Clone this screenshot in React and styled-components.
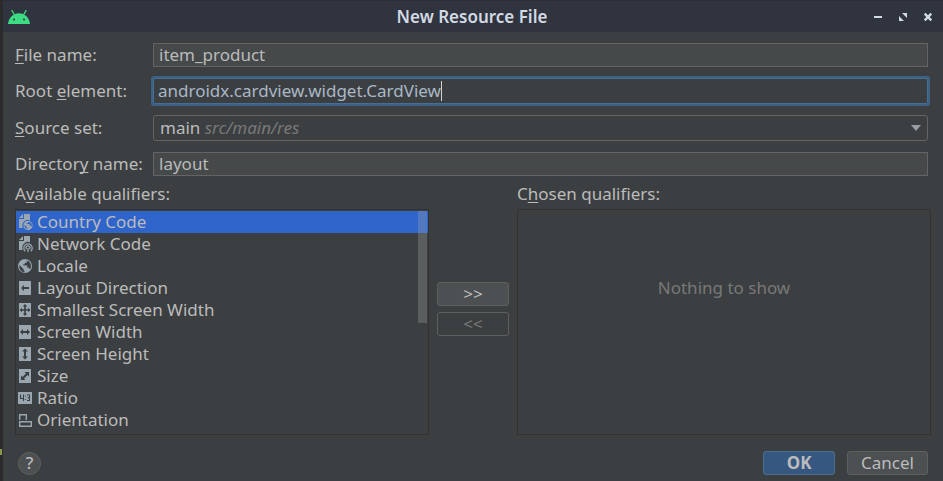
import React, { useState } from "react";
import styled, { createGlobalStyle, css } from "styled-components";

const GlobalStyle = createGlobalStyle`
  * { box-sizing: border-box; }
  body {
    margin: 0;
    background: #3c3f41;
    color: #bbbbbb;
    font-family: "Noto Sans", "Open Sans", sans-serif;
    font-size: 17px;
    line-height: 22px;
  }
  button, input, select { font: inherit; color: inherit; margin: 0; }
`;

const Screen = styled.div`
  display: grid;
  grid-template-columns: 3px 1fr;
  min-height: 100vh;
  background: #3c3f41;
`;

const Gutter = styled.div`
  display: flex;
  align-items: flex-end;
  padding-bottom: 26px;
  background: #2b2b2e;
`;

const GutterMark = styled.span`
  width: 2px;
  height: 6px;
  background: #8a9a4a;
`;

const Dialog = styled.main`
  display: flex;
  flex-direction: column;
  min-width: 0;
`;

const TitleBar = styled.header`
  display: grid;
  grid-template-columns: 90px 1fr 90px;
  align-items: center;
  height: 32px;
  border-top: 1px solid #2b2e37;
  padding: 0 7px 0 5px;
  background: #2f343f;
  color: #d3dae3;
`;

const Title = styled.h1`
  margin: 0;
  font-size: 17px;
  font-weight: 600;
  line-height: 22px;
  text-align: center;
`;

const WindowButtons = styled.div`
  display: flex;
  justify-content: flex-end;
  gap: 9px;
`;

const WindowButton = styled.button`
  display: flex;
  width: 16px;
  height: 16px;
  padding: 0;
  border: 0;
  background: none;
`;

const Form = styled.div`
  display: grid;
  grid-template-columns: 138px 1fr;
  row-gap: 11px;
  align-items: center;
  padding: 11px 15px 0 12px;
`;

const Label = styled.label`
  white-space: nowrap;
`;

const Mnemonic = styled.span`
  text-decoration: underline;
  text-decoration-thickness: 1px;
  text-decoration-skip-ink: none;
  text-underline-offset: 2px;
`;

const TextInput = styled.input`
  width: 100%;
  height: 24px;
  padding: 0 5px 2px;
  border: 1px solid #646464;
  outline: none;
  background: #45494a;
`;

const FocusedField = styled.div`
  display: flex;
  align-items: center;
  height: 26px;
  padding: 0 4px;
  border: 1px solid #466d94;
  border-radius: 1px;
  box-shadow: 0 0 0 2px #3d6185;
  color: #a9b7c6;
`;

const BareInput = styled.input`
  field-sizing: content;
  min-width: 20px;
  height: 22px;
  padding: 0;
  border: 0;
  outline: none;
  background: none;
  caret-color: transparent;
`;

const Caret = styled.span`
  width: 1px;
  height: 20px;
  background: #d0d0d0;
`;

const Combo = styled.div`
  display: grid;
  grid-template-columns: 1fr 22px;
  align-items: center;
  height: 26px;
  border: 1px solid #646464;
  border-radius: 3px;
`;

const ComboSelect = styled.select`
  grid-area: 1 / 1 / 2 / 3;
  width: 100%;
  height: 24px;
  border: 0;
  outline: none;
  appearance: none;
  background: transparent;
  color: transparent;
`;

const ComboValue = styled.span`
  grid-area: 1 / 1;
  padding-left: 6px;
  pointer-events: none;
`;

const ComboPath = styled.em`
  color: #787878;
`;

const ComboArrow = styled.svg`
  grid-area: 1 / 2;
  justify-self: center;
  pointer-events: none;
`;

const Qualifiers = styled.div`
  display: grid;
  grid-template-columns: 1fr 88px 1fr;
  padding: 6px 12px 0;
`;

const Panel = styled.section`
  display: flex;
  flex-direction: column;
  gap: 3px;
  min-width: 0;
`;

const PanelTitle = styled.h2`
  margin: 0;
  font-size: 17px;
  font-weight: 400;
  line-height: 24px;
`;

const ListBox = styled.div`
  position: relative;
  flex: 1;
  border: 1px solid #323232;
  padding: 1px 0 3px;
`;

const List = styled.ul`
  margin: 0;
  padding: 0;
  list-style: none;
`;

const Row = styled.li`
  display: flex;
  align-items: center;
  gap: 4px;
  height: 22px;
  padding-left: 1px;
  white-space: nowrap;
  cursor: default;
  ${(p) => p.$selected && css`background: #2f65ca;`}
`;

const ScrollThumb = styled.div`
  position: absolute;
  top: 1px;
  right: 1px;
  width: 9px;
  height: 112px;
  background: rgba(166, 166, 166, 0.3);
`;

const Empty = styled.p`
  margin: 66px 0 0;
  color: #787878;
  text-align: center;
`;

const Movers = styled.div`
  display: flex;
  flex-direction: column;
  gap: 6px;
  padding: 100px 8px 0;
`;

const tones = {
  normal: css`background: #4c5052; border-color: #5e6060;`,
  primary: css`background: #365880; border-color: #4c708c; font-weight: 700;`,
  disabled: css`background: transparent; border-color: #5e6060; color: #777777;`,
};

const Button = styled.button`
  min-width: 72px;
  height: 24px;
  padding: 0 13px;
  border: 1px solid;
  border-radius: 3px;
  line-height: 22px;
  ${(p) => tones[p.$tone || "normal"]}
`;

const Footer = styled.footer`
  display: flex;
  align-items: center;
  gap: 12px;
  padding: 16px 15px 6px;
`;

const HelpButton = styled.button`
  width: 23px;
  height: 23px;
  margin-right: auto;
  padding: 0;
  border: 1px solid #5e6060;
  border-radius: 50%;
  background: #4c5052;
  font-weight: 500;
  line-height: 20px;
`;

const INK = "#9aa7b0";

const Globe = () => (
  <>
    <circle cx="8" cy="8" r="7" fill={INK} />
    <path d="M2.6 7.2 6.5 11v1.2l1 1v1.2C4.300 14 2 11.300 2.300 8ZM8 2.300h2.200v1.500l-1 1H7.800v1.500H6.300v1.200h4v2.200h1.400l1.300 1.500c1.600-2.600 1.200-6.300-1.800-8.200Z" fill="#3c3f41" />
  </>
);

const Page = () => (
  <path d="M6 0v4H2Zm1 0h6v6.200a5.800 5.800 0 0 0-7.800 5.400c0 1 .2 1.700.5 2.400H2V5h5Z" fill={INK} />
);

const Tile = ({ d }) => (
  <>
    <path d="M2 1h12v14H2Z" fill={INK} />
    <path d={d} fill="#3c3f41" />
  </>
);

const drawings = {
  country: (
    <>
      <Page />
      <path fillRule="evenodd" d="M11 6.800a4.600 4.600 0 1 1 0 9.200 4.600 4.600 0 0 1 0-9.200ZM7.500 10.900c-.2 1.900.8 3.500 2.700 4v-1L9.300 13v-.8Zm4-3.100-.6 1.100-1 .2v1h2.600v1.400h.9l1 1.200c1-1.700.2-4.200-2.900-4.900Z" fill={INK} />
    </>
  ),
  network: (
    <>
      <Page />
      <path d="M8.200 15.200a4.200 4.200 0 1 1 5.600 0M9.500 13.300a2 2 0 1 1 3 0M11 12v4" fill="none" stroke={INK} strokeWidth="1.3" />
    </>
  ),
  locale: <Globe />,
  direction: <Tile d="M4 8l3-3v2h5v2H7v2Z" />,
  smallest: <Tile d="M8 2l2.200 2.600H8.800v2.600h2.200V5.800L13.500 8 11 10.200V8.800H8.800v2.600h1.400L8 14l-2.200-2.600h1.400V8.800H5v1.400L2.500 8 5 5.800v1.400h2.200V4.600H5.800Z" />,
  width: <Tile d="M3 8l3-3v2h4V5l3 3-3 3V9H6v2Z" />,
  height: <Tile d="M8 2.500l3 3H9v5h2l-3 3-3-3h2v-5H5Z" />,
  size: <Tile d="M12 4v4.500l-1.500-1.500L7 10.500 8.500 12H4V7.500L5.500 9 9 5.500 7.500 4Z" />,
  ratio: (
    <>
      <path d="M1 2h14v12H1Z" fill={INK} />
      <path d="M3.500 4.500v4h3M6.500 4.500v6.500M8 6h1M8 9.500h1M10 5h2.500v5.500H10M10.500 7.800H12" fill="none" stroke="#3c3f41" strokeWidth="1.100" />
    </>
  ),
  orientation: (
    <path d="M2.700 8V2.700h6.600V8M2.700 9.700h11.600v4.600H2.700Z" fill="none" stroke={INK} strokeWidth="1.400" />
  ),
};

const qualifiers = [
  ["country", "Country Code"],
  ["network", "Network Code"],
  ["locale", "Locale"],
  ["direction", "Layout Direction"],
  ["smallest", "Smallest Screen Width"],
  ["width", "Screen Width"],
  ["height", "Screen Height"],
  ["size", "Size"],
  ["ratio", "Ratio"],
  ["orientation", "Orientation"],
];

const AndroidLogo = () => (
  <svg width="22" height="14" viewBox="0 0 22 14" aria-hidden="true">
    <path d="M4 .6 6.300 4.600M18 .6l-2.300 4" stroke="#3ddc84" strokeWidth="1.200" strokeLinecap="round" />
    <path d="M0 14C.4 8.500 4.800 3.200 11 3.200S21.600 8.500 22 14Z" fill="#3ddc84" />
    <circle cx="6" cy="9.500" r="1" fill="#2f343f" />
    <circle cx="16" cy="9.500" r="1" fill="#2f343f" />
  </svg>
);

export default function App() {
  const [selected, setSelected] = useState("country");

  return (
    <Screen>
      <GlobalStyle />
      <Gutter>
        <GutterMark />
      </Gutter>
      <Dialog>
        <TitleBar>
          <AndroidLogo />
          <Title>New Resource File</Title>
          <WindowButtons>
            <WindowButton aria-label="Minimize">
              <svg width="16" height="16"><path d="M4 7h8v2H4Z" fill="#d3dae3" /></svg>
            </WindowButton>
            <WindowButton aria-label="Maximize">
              <svg width="16" height="16"><path d="M7 4h5v5ZM4 7v5h5Z" fill="#d3dae3" /></svg>
            </WindowButton>
            <WindowButton aria-label="Close">
              <svg width="16" height="16"><path d="M4.700 4.700l6.600 6.600M11.300 4.700l-6.600 6.600" stroke="#d3dae3" strokeWidth="2.400" /></svg>
            </WindowButton>
          </WindowButtons>
        </TitleBar>

        <Form>
          <Label htmlFor="file-name"><Mnemonic>F</Mnemonic>ile name:</Label>
          <TextInput id="file-name" defaultValue="item_product" />

          <Label htmlFor="root-element">Root <Mnemonic>e</Mnemonic>lement:</Label>
          <FocusedField>
            <BareInput id="root-element" defaultValue="androidx.cardview.widget.CardView" spellCheck={false} />
            <Caret />
          </FocusedField>

          <Label htmlFor="source-set"><Mnemonic>S</Mnemonic>ource set:</Label>
          <Combo>
            <ComboSelect id="source-set" defaultValue="main">
              <option value="main">main</option>
            </ComboSelect>
            <ComboValue>main <ComboPath>src/main/res</ComboPath></ComboValue>
            <ComboArrow width="10" height="6" viewBox="0 0 10 6" aria-hidden="true">
              <path d="M0 0h10L5 6Z" fill="#9a9da0" />
            </ComboArrow>
          </Combo>

          <Label htmlFor="directory-name">Director<Mnemonic>y</Mnemonic> name:</Label>
          <TextInput id="directory-name" defaultValue="layout" />
        </Form>

        <Qualifiers>
          <Panel>
            <PanelTitle id="available">A<Mnemonic>v</Mnemonic>ailable qualifiers:</PanelTitle>
            <ListBox>
              <List role="listbox" aria-labelledby="available">
                {qualifiers.map(([id, name]) => (
                  <Row
                    key={id}
                    role="option"
                    aria-selected={selected === id}
                    $selected={selected === id}
                    onClick={() => setSelected(id)}
                  >
                    <svg width="16" height="16" viewBox="0 0 16 16" aria-hidden="true">{drawings[id]}</svg>
                    {name}
                  </Row>
                ))}
              </List>
              <ScrollThumb />
            </ListBox>
          </Panel>

          <Movers>
            <Button aria-label="Add qualifier">&gt;&gt;</Button>
            <Button aria-label="Remove qualifier" $tone="disabled" disabled>&lt;&lt;</Button>
          </Movers>

          <Panel>
            <PanelTitle>C<Mnemonic>h</Mnemonic>osen qualifiers:</PanelTitle>
            <ListBox>
              <Empty>Nothing to show</Empty>
            </ListBox>
          </Panel>
        </Qualifiers>

        <Footer>
          <HelpButton aria-label="Help">?</HelpButton>
          <Button $tone="primary">OK</Button>
          <Button>Cancel</Button>
        </Footer>
      </Dialog>
    </Screen>
  );
}
